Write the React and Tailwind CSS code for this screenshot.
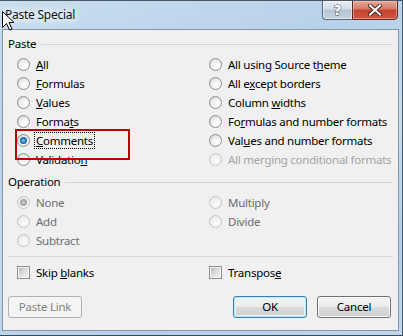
import React from "react";

function Radio({ checked, disabled }) {
  return (
    <span
      className={
        disabled
          ? "flex h-[13px] w-[13px] shrink-0 items-center justify-center rounded-full border border-[#c2c4c6] bg-[radial-gradient(circle_at_65%_70%,#fbfbfb_0%,#f1f1f1_50%,#e2e2e2_100%)]"
          : "flex h-[13px] w-[13px] shrink-0 items-center justify-center rounded-full border border-[#8e8f8f] bg-[radial-gradient(circle_at_65%_70%,#ffffff_0%,#f2f2f2_45%,#cdcdcd_100%)]"
      }
    >
      {checked && !disabled && (
        <span className="h-[7px] w-[7px] rounded-full bg-[radial-gradient(circle_at_50%_50%,#7fd0ff_0%,#2a8ad0_40%,#0f4f80_80%,#0b3558_100%)]" />
      )}
      {checked && disabled && (
        <span className="h-[7px] w-[7px] rounded-full bg-[radial-gradient(circle_at_50%_50%,#d0d0d0_0%,#a6a6a6_50%,#8a8a8a_100%)]" />
      )}
    </span>
  );
}

function Check() {
  return (
    <span className="flex h-[13px] w-[13px] shrink-0 items-center justify-center border border-[#8e8f8f] bg-[#f4f4f4]">
      <span className="h-[9px] w-[9px] bg-[linear-gradient(135deg,#b9bec4_0%,#dcdee0_50%,#f3f3f3_100%)]" />
    </span>
  );
}

function Opt({ children, checked, disabled, dim, focus }) {
  return (
    <div className="flex h-[19px] items-center whitespace-nowrap">
      <Radio checked={checked} disabled={disabled} />
      <span
        className={
          focus
            ? "ml-[4px] border border-dotted border-black px-[1px] leading-[15px]"
            : dim
            ? "ml-[6px] text-[#a3a3a3]"
            : disabled
            ? "ml-[6px] text-[#6d6d6d]"
            : "ml-[6px] text-black"
        }
      >
        {children}
      </span>
    </div>
  );
}

function Header({ children }) {
  return (
    <div className="flex h-[16px] items-center pl-[5px] pr-[6px]">
      <span className="text-black">{children}</span>
      <span className="ml-[5px] h-px flex-1 bg-[#d5d5d5]" />
    </div>
  );
}

export default function App() {
  return (
    <div className="relative h-[336px] w-[403px] overflow-hidden border-t border-r border-b border-t-[#4b5663] border-r-[#4b5663] border-b-[#3d4855] bg-[linear-gradient(160deg,#c9dff0_0%,#b7d1ea_30%,#c5dcf0_55%,#b5cfe8_80%,#bfd7ee_100%)] font-['Noto_Sans',sans-serif] text-[11.5px] leading-[16px] tracking-[-0.25px] text-black">
      {/* title bar */}
      <div className="relative flex h-[28px] items-center">
        <span className="ml-[3px] whitespace-nowrap px-[2px] text-[12px] text-[#111] [text-shadow:0_0_6px_#ffffff,0_0_10px_#ffffff,0_0_12px_#eaf4fc]">
          Paste Special
        </span>
        <div className="absolute right-[4px] top-[-1px] flex">
          <div className="flex h-[20px] w-[30px] items-center justify-center rounded-bl-[4px] border border-r-0 border-[#5a6b7c] bg-[linear-gradient(180deg,#e8eef4_0%,#d2dde8_45%,#b6c5d3_50%,#c4d2de_100%)] shadow-[inset_0_0_0_1px_rgba(255,255,255,0.5)]">
            <span className="font-['DejaVu_Sans',sans-serif] text-[14px] font-bold leading-none text-white [-webkit-text-stroke:1px_#485664] [paint-order:stroke_fill]">
              ?
            </span>
          </div>
          <div className="flex h-[20px] w-[46px] items-center justify-center rounded-br-[4px] border border-[#5a2a22] bg-[linear-gradient(180deg,#e8a898_0%,#d67a66_45%,#c2412d_50%,#d2573f_100%)] shadow-[inset_0_0_0_1px_rgba(255,220,210,0.45)]">
            <svg width="14" height="12" viewBox="0 0 14 12">
              <path d="M2 1.5 L12 10.5 M12 1.5 L2 10.5" stroke="#4a2620" strokeWidth="4" strokeLinecap="square" />
              <path d="M2 1.5 L12 10.5 M12 1.5 L2 10.5" stroke="#ffffff" strokeWidth="2" strokeLinecap="square" />
            </svg>
          </div>
        </div>
        {/* mouse cursor */}
        <svg className="absolute left-[2px] top-[10px]" width="13" height="20" viewBox="0 0 13 20">
          <path d="M0.5 0.5 L0.5 16.5 L4.5 12.5 L7.5 19 L10 18 L7 11.5 L12 11.5 Z" fill="#ffffff" stroke="#000000" strokeWidth="1" strokeLinejoin="miter" />
        </svg>
      </div>

      {/* client area */}
      <div className="ml-[2px] flex h-[302px] w-[397px] flex-col border border-[#8696a6] bg-[#f0f0f0]">
        <div className="mt-[6px]">
          <Header>Paste</Header>
        </div>
        <div className="mt-[3px] flex pl-[14px]">
          <div className="w-[192px] shrink-0">
            <Opt>
              <u>A</u>ll
            </Opt>
            <Opt>
              <u>F</u>ormulas
            </Opt>
            <Opt>
              <u>V</u>alues
            </Opt>
            <Opt>
              Forma<u>t</u>s
            </Opt>
            <Opt checked focus>
              <u>C</u>omments
            </Opt>
            <Opt>
              Validatio<u>n</u>
            </Opt>
          </div>
          <div>
            <Opt>
              All using Source t<u>h</u>eme
            </Opt>
            <Opt>
              All e<u>x</u>cept borders
            </Opt>
            <Opt>
              Column <u>w</u>idths
            </Opt>
            <Opt>
              Fo<u>r</u>mulas and number formats
            </Opt>
            <Opt>
              Val<u>u</u>es and number formats
            </Opt>
            <Opt disabled dim>
              All merging conditional formats
            </Opt>
          </div>
        </div>

        <div className="mt-[5px]">
          <Header>Operation</Header>
        </div>
        <div className="mt-[3px] flex pl-[14px]">
          <div className="w-[192px] shrink-0">
            <Opt checked disabled>
              None
            </Opt>
            <Opt disabled>Add</Opt>
            <Opt disabled>Subtract</Opt>
          </div>
          <div>
            <Opt disabled>Multiply</Opt>
            <Opt disabled>Divide</Opt>
          </div>
        </div>

        <div className="mx-[5px] mt-[6px] h-px bg-[#d5d5d5]" />

        <div className="mt-[6px] flex h-[19px] pl-[14px]">
          <div className="flex w-[192px] shrink-0 items-center">
            <Check />
            <span className="ml-[6px]">
              Skip <u>b</u>lanks
            </span>
          </div>
          <div className="flex items-center">
            <Check />
            <span className="ml-[6px]">
              Transpos<u>e</u>
            </span>
          </div>
        </div>

        <div className="mt-[14px] flex h-[22px] pl-[5px]">
          <div className="flex h-[22px] w-[74px] items-center justify-center rounded-[3px] border border-[#adb2b5] bg-[#f4f4f4] text-[#838383]">
            Paste Link
          </div>
          <div className="ml-auto flex h-[22px] w-[74px] items-center justify-center rounded-[3px] border border-[#3c7fb1] bg-[linear-gradient(180deg,#f3f3f3_0%,#ebebeb_50%,#dddddd_50%,#cfcfcf_100%)] shadow-[inset_0_0_0_1px_#bfe6fb,inset_0_0_0_2px_#e4f4fc]">
            OK
          </div>
          <div className="ml-[10px] mr-[7px] flex h-[22px] w-[74px] items-center justify-center rounded-[3px] border border-[#707070] bg-[linear-gradient(180deg,#f3f3f3_0%,#ebebeb_50%,#dddddd_50%,#cfcfcf_100%)] shadow-[inset_0_0_0_1px_#fcfcfc]">
            Cancel
          </div>
        </div>
      </div>

      {/* red highlight annotation */}
      <div className="pointer-events-none absolute left-[15px] top-[128px] h-[31px] w-[115px] border-2 border-[#c00000]" />
    </div>
  );
}
